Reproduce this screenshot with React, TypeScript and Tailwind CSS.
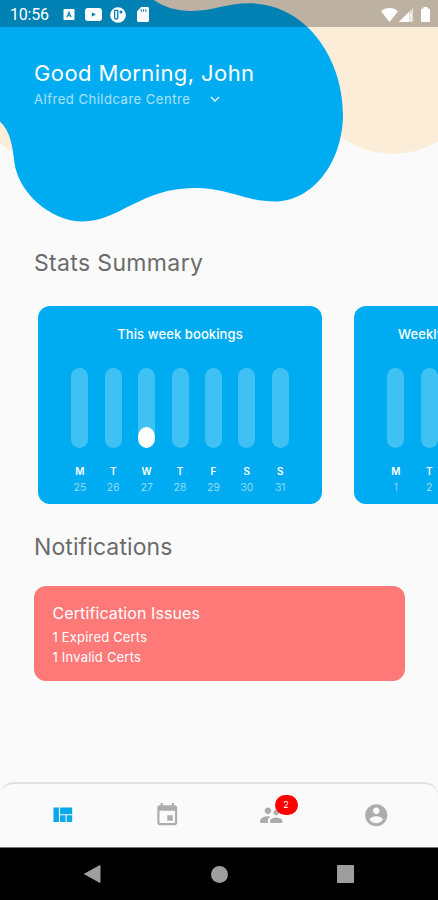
import type { ReactNode } from "react";

type Day = { label: string; date: number; value: number };

const DAY_LABELS = ["M", "T", "W", "T", "F", "S", "S"];

const thisWeek: Day[] = DAY_LABELS.map((label, i) => ({
  label,
  date: 25 + i,
  value: i === 2 ? 26 : 0,
}));

const nextWeek: Day[] = DAY_LABELS.map((label, i) => ({
  label,
  date: 1 + i,
  value: 0,
}));

function StatusBar() {
  return (
    <div className="relative flex h-[27px] shrink-0 items-center bg-black/25 pt-[2px] pr-[8px] pl-[10px] text-white">
      <span className="w-[53px] font-['Roboto'] text-[16px] leading-none tracking-[-0.2px]">
        10:56
      </span>
      <svg className="h-[11px] w-[12px]" viewBox="0 0 12 11" fill="none">
        <rect x="0.5" width="11" height="11" rx="1" fill="#fff" />
        <path d="M3.9 8.3 6 3.2l2.1 5.1M4.6 6.7h2.8" stroke="#0781b3" strokeWidth="1.1" />
      </svg>
      <svg className="ml-[10px] h-[13px] w-[17px]" viewBox="0 0 17 13">
        <rect width="17" height="13" rx="3" fill="#fff" />
        <path d="M6.8 4.2v4.6l4-2.3z" fill="#0781b3" />
      </svg>
      <svg className="ml-[8px] h-[16px] w-[16px]" viewBox="0 0 16 16" fill="none">
        <circle cx="8" cy="8" r="7.8" fill="#fff" />
        <path d="M4.6 3.4h3.2v7a1.6 1.6 0 0 1-3.200 0z" stroke="#0781b3" strokeWidth="1.300" />
        <circle cx="11" cy="5" r="1.500" fill="#0781b3" />
      </svg>
      <svg className="ml-[11px] h-[15px] w-[12px]" viewBox="0 0 12 15">
        <path d="M4.2 0H10.6A1.4 1.4 0 0 1 12 1.4v12.2a1.4 1.4 0 0 1-1.4 1.4H1.4A1.4 1.4 0 0 1 0 13.6V4.3z" fill="#fff" />
        <path d="M4.3 2.2v2.6M6.6 2.2v2.6M8.9 2.2v2.6" stroke="#0781b3" strokeWidth="1" />
      </svg>
      <svg className="ml-auto h-[14px] w-[17px]" viewBox="0 0 17 14">
        <path d="M8.5 14 0 3.3C2.2 1.2 5.2 0 8.5 0S14.8 1.2 17 3.3z" fill="#fff" />
      </svg>
      <svg className="ml-[1px] h-[14px] w-[15px]" viewBox="0 0 15 14">
        <path d="M0 14 14 0v14z" fill="#fff" fillOpacity="0.55" />
        <path d="M0 14 10 4v10z" fill="#fff" />
        <path d="M11.3 5.5h1.5v4h-1.5zM11.3 11h1.5v1.5h-1.5z" fill="#fff" />
      </svg>
      <svg className="ml-[7px] h-[15px] w-[9px]" viewBox="0 0 9 15">
        <path d="M2.5 0h4v1.6h1.200c.7 0 1.300.6 1.300 1.300v10.800c0 .7-.6 1.300-1.300 1.300H1.300C.6 15 0 14.400 0 13.700V2.900c0-.7.6-1.300 1.300-1.300h1.200z" fill="#fff" />
      </svg>
    </div>
  );
}

function HeaderBlob() {
  return (
    <svg className="absolute top-0 left-0 h-[230px] w-[438px]" viewBox="0 0 438 230">
      <path d="M140 0H438V141.5C424 149.5 409 153.8 393 153.8C375 153.8 359 148.5 345 139.5L300 100Z" fill="#fcedd8" />
      <path d="M0 110V143.5C4 147 9 150 14 152L20 130Z" fill="#fcedd8" />
      <path
        d="M0 0H154C164 7 176 11 192 11C214 11 226 3.3 249 3.3C307 3.3 343 60 343 114C343 163 312 201.5 275 201.5C245 201.5 229 188 194 188C142 188 118 221.5 83 221.5C49 221.5 18 191 14.500 163C12.500 145 10 131 0 121.500Z"
        fill="#00acf1"
      />
    </svg>
  );
}

function BookingCard({ title, days }: { title: string; days: Day[] }) {
  return (
    <div className="flex h-[197.5px] w-[284px] shrink-0 flex-col items-center rounded-[12px] bg-[#00acf1] pt-[17.5px] text-white">
      <h3 className="text-[13px] leading-[20px] font-medium tracking-[0.1px] whitespace-nowrap">
        {title}
      </h3>
      <div className="mt-[24px] flex gap-[16.4px]">
        {days.map((day, i) => (
          <div key={i} className="flex w-[17px] flex-col items-center">
            <div className="flex h-[80.5px] w-full flex-col justify-end rounded-[8.5px] bg-white/25">
              {day.value > 0 && (
                <div
                  className="w-full rounded-[8.5px/10px] bg-white"
                  style={{ height: `${day.value}%` }}
                />
              )}
            </div>
            <span className="mt-[15.5px] text-[10px] leading-[14px] font-semibold">{day.label}</span>
            <span className="mt-[3px] text-[10.5px] leading-[14px] font-light text-white/65">
              {day.date}
            </span>
          </div>
        ))}
      </div>
    </div>
  );
}

function NavIcon({ active, path, children }: { active?: boolean; path: string; children?: ReactNode }) {
  return (
    <button className="relative flex flex-1 items-center justify-center">
      <svg
        className={active ? "h-[26.5px] w-[26.5px] text-[#0ba9ea]" : "h-[26.5px] w-[26.5px] text-[#adadad]"}
        viewBox="0 0 24 24"
        fill="currentColor"
      >
        <path d={path} />
      </svg>
      {children}
    </button>
  );
}

function BottomNav() {
  return (
    <nav className="flex h-[65px] shrink-0 rounded-t-[14px] border-t-[2.5px] border-[#e1e1e1] bg-[#fafafa] px-[10px]">
      <NavIcon active path="M10 18h5v-6h-5v6zm-6 0h5V5H4v13zm12 0h5v-6h-5v6zM10 5v6h11V5H10z" />
      <NavIcon path="M17 12h-5v5h5v-5zM16 1v2H8V1H6v2H5c-1.11 0-1.99.9-1.99 2L3 19c0 1.1.89 2 2 2h14c1.1 0 2-.9 2-2V5c0-1.1-.9-2-2-2h-1V1h-2zm3 18H5V8h14v11z" />
      <NavIcon path="M16.5 12c1.38 0 2.49-1.12 2.49-2.5S17.88 7 16.5 7 14 8.12 14 9.5s1.12 2.5 2.5 2.5zM9 11c1.66 0 2.99-1.34 2.99-3S10.66 5 9 5 6 6.34 6 8s1.34 3 3 3zm7.5 3c-1.83 0-5.5.92-5.5 2.75V19h11v-2.25c0-1.83-3.67-2.75-5.5-2.75zM9 13c-2.33 0-7 1.17-7 3.5V19h7v-2.25c0-.85.33-2.34 2.37-3.47C10.5 13.1 9.66 13 9 13z">
        <span className="absolute top-[10.5px] left-[55.5px] flex h-[20.5px] w-[23px] items-center justify-center rounded-full bg-[#fe0000] text-[9px] text-white">
          2
        </span>
      </NavIcon>
      <NavIcon path="M12 2C6.48 2 2 6.48 2 12s4.48 10 10 10 10-4.48 10-10S17.52 2 12 2zm0 3c1.66 0 3 1.34 3 3s-1.34 3-3 3-3-1.34-3-3 1.34-3 3-3zm0 14.2c-2.5 0-4.71-1.28-6-3.22.03-1.99 4-3.08 6-3.08 1.99 0 5.97 1.09 6 3.08-1.29 1.94-3.5 3.22-6 3.22z" />
    </nav>
  );
}

function SystemNav() {
  return (
    <div className="flex h-[53px] shrink-0 items-center justify-between border-t border-[#777] bg-black px-[84px]">
      <svg className="h-[18px] w-[17px]" viewBox="0 0 17 18">
        <path d="M16 .5v17L.5 9z" fill="#9e9e9e" stroke="#9e9e9e" strokeLinejoin="round" />
      </svg>
      <span className="ml-[1px] h-[17px] w-[17px] rounded-full bg-[#9e9e9e]" />
      <span className="h-[17.5px] w-[17.5px] rounded-[1px] bg-[#9e9e9e]" />
    </div>
  );
}

export default function App() {
  return (
    <div className="relative flex h-[900px] w-[438px] flex-col overflow-hidden bg-[#fafafa] font-['Inter',sans-serif]">
      <HeaderBlob />
      <StatusBar />

      {/* Greeting */}
      <header className="relative mt-[31px] h-[190px] pl-[34px] text-white">
        <h1 className="text-[22px] leading-[30px] tracking-[0.4px] whitespace-nowrap">
          Good Morning, John
        </h1>
        <div className="mt-[1px] flex items-center">
          <span className="text-[13px] leading-[20px] tracking-[0.52px] whitespace-nowrap text-white/65">
            Alfred Childcare Centre
          </span>
          <svg className="ml-[19.5px] h-[6px] w-[10px]" viewBox="0 0 10 6" fill="none">
            <path d="M1 1l4 4 4-4" stroke="#d5f1fc" strokeWidth="1.5" />
          </svg>
        </div>
      </header>

      {/* Stats */}
      <h2 className="pl-[34px] text-[23px] leading-[30px] tracking-[0.35px] text-[#6b6b6b]">
        Stats Summary
      </h2>
      <div className="mt-[28px] flex gap-[32px] pl-[38px]">
        <BookingCard title="This week bookings" days={thisWeek} />
        <BookingCard title="Weekly bookings for the rooms" days={nextWeek} />
      </div>

      {/* Notifications */}
      <h2 className="mt-[28.5px] pl-[34px] text-[23px] leading-[30px] tracking-[0.1px] text-[#6b6b6b]">
        Notifications
      </h2>
      <div className="mt-[24px] ml-[34px] h-[94.5px] w-[371px] rounded-[12px] bg-[#ff7979] pt-[14.5px] pl-[18.5px] text-white">
        <h3 className="text-[16px] leading-[24px] tracking-[0.1px]">Certification Issues</h3>
        <p className="mt-[2px] text-[13px] leading-[20px] tracking-[0.18px]">1 Expired Certs</p>
        <p className="text-[13px] leading-[20px] tracking-[0.2px]">1 Invalid Certs</p>
      </div>

      <div className="mt-auto flex flex-col">
        <BottomNav />
        <SystemNav />
      </div>
    </div>
  );
}
